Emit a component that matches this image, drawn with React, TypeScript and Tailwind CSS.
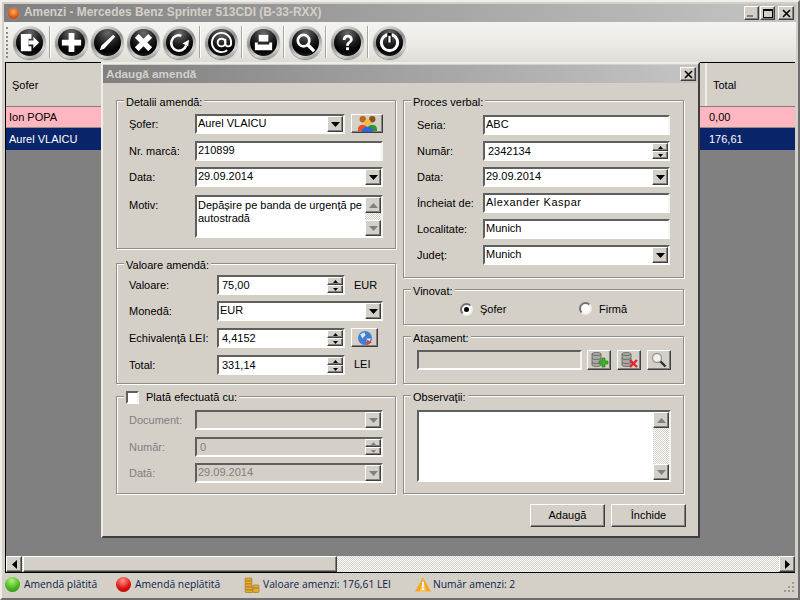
import { ReactNode } from "react";

const raised =
  "border border-t-white border-l-white border-r-[#404040] border-b-[#404040] shadow-[inset_-1px_-1px_0_#808080] bg-[#d4d0c8]";
const sunken =
  "border-2 border-t-[#5f5f5f] border-l-[#5f5f5f] border-r-[#f4f3ef] border-b-white";
const dither =
  "bg-[repeating-conic-gradient(#d4d0c8_0_25%,#ffffff_0_50%)] bg-[length:2px_2px]";
const uiFont = "font-['Liberation_Sans',Arial,sans-serif] text-[11px]";

function Round({ children }: { children: ReactNode }) {
  return (
    <div className="w-[36px] h-[40px] flex items-center justify-center shrink-0">
      <div className="w-[33px] h-[33px] rounded-full bg-[linear-gradient(160deg,#f5f5f5_0%,#8c8c8c_45%,#d8d8d8_75%,#6f6f6f_100%)] flex items-center justify-center shadow-[0_1px_1px_#8a8a8a]">
        <div className="w-[27px] h-[27px] rounded-full bg-[radial-gradient(circle_at_50%_15%,#6a6a6a_0%,#1c1c1c_45%,#000000_70%,#333333_100%)] flex items-center justify-center">
          <svg width="23" height="23" viewBox="0 0 24 24">
            {children}
          </svg>
        </div>
      </div>
    </div>
  );
}

function Sep() {
  return (
    <div className="w-[6px] h-[32px] shrink-0 flex justify-center">
      <div className="w-[2px] h-full border-l border-l-[#a8a69e] border-r border-r-white" />
    </div>
  );
}

function Toolbar() {
  return (
    <div className="h-[40px] flex items-center bg-[linear-gradient(180deg,#f4f3ef_0%,#ebeae5_60%,#dedcd5_100%)] relative">
      <div className="w-[2px] h-[31px] ml-[2px] mr-[3px] border-l-2 border-dotted border-l-[#8b8980]" />
      <Round>
        <path d="M3 3h11v5h-3v8h3v5H3z" fill="#fff" />
        <path d="M11 10h5V6l6 6-6 6v-4h-5z" fill="#fff" />
      </Round>
      <Sep />
      <Round>
        <path d="M9 2h6v7h7v6h-7v7H9v-7H2V9h7z" fill="#fff" />
      </Round>
      <Round>
        <path d="M4 20l1.500-4.500L18 4l2 2L8.500 18.500z" fill="#fff" />
      </Round>
      <Round>
        <path d="M7 3l5 5 5-5 4 4-5 5 5 5-4 4-5-5-5 5-4-4 5-5-5-5z" fill="#fff" />
      </Round>
      <Round>
        <path d="M19 15a8 8 0 1 1-5-10" fill="none" stroke="#fff" strokeWidth="2.600" />
        <path d="M22 9l-1 7-6-3z" fill="#fff" />
      </Round>
      <Sep />
      <Round>
        <g fill="none" stroke="#fff" strokeWidth="2">
          <circle cx="12" cy="12" r="4" />
          <path d="M16 8v5a3 3 0 0 0 6 0v-1a10 10 0 1 0-4 8" />
        </g>
      </Round>
      <Sep />
      <Round>
        <path d="M7 4h10v7H7z" fill="#fff" />
        <path d="M3 12h3v2h12v-2h3v8H3z" fill="#fff" />
      </Round>
      <Sep />
      <Round>
        <circle cx="10" cy="10" r="6" fill="none" stroke="#fff" strokeWidth="2.800" />
        <path d="M14 14l7 7" stroke="#fff" strokeWidth="3.600" />
      </Round>
      <Sep />
      <Round>
        <path
          d="M7 9.500C7 6 9 4 12.200 4 15.400 4 17.500 6 17.500 8.700c0 3.800-4 3.600-4 6.800h-3c0-4.500 4-4.300 4-6.700 0-1.200-.9-2-2.200-2-1.500 0-2.300 1-2.400 2.700z"
          fill="#fff"
        />
        <rect x="10.500" y="17" width="3" height="3" fill="#fff" />
      </Round>
      <Sep />
      <Round>
        <circle cx="12" cy="12" r="8.500" fill="none" stroke="#fff" strokeWidth="3.200" />
        <path d="M12 2v10" stroke="#000" strokeWidth="4.500" />
        <path d="M12 5v7" stroke="#fff" strokeWidth="2.400" />
      </Round>
    </div>
  );
}

function WinBtn({ children, className }: { children: ReactNode; className?: string }) {
  return (
    <div className={`${raised} flex items-center justify-center h-[14px] ${className ?? ""}`}>
      {children}
    </div>
  );
}

function Cross() {
  return (
    <svg width="9" height="9" viewBox="0 0 9 9">
      <path d="M1 1l7 7M8 1L1 8" stroke="#000" strokeWidth="1.600" />
    </svg>
  );
}

function TitleBar() {
  return (
    <div className="h-[18px] flex items-center bg-[linear-gradient(90deg,#808080_0%,#c4c4c4_100%)]">
      <div className="w-[13px] h-[13px] ml-[3px] rounded-full border border-[#8a8a8a] bg-[radial-gradient(circle_at_50%_35%,#ffb34d_0%,#e2531a_60%,#a82c10_100%)]" />
      <span className="ml-[4px] font-['Liberation_Sans',Arial,sans-serif] text-[11.900px] font-bold text-[#d4d0c8] whitespace-nowrap">
        Amenzi - Mercedes Benz Sprinter 513CDI (B-33-RXX)
      </span>
      <div className="ml-auto mr-[2px] flex">
        <WinBtn className="w-[15px] items-end pb-[2px]">
          <div className="w-[6px] h-[2px] bg-[#808080] mr-[3px]" />
        </WinBtn>
        <WinBtn className="w-[15px] ml-[1px]">
          <div className="w-[10px] h-[9px] border border-t-2 border-black" />
        </WinBtn>
        <WinBtn className="w-[16px] ml-[3px]">
          <Cross />
        </WinBtn>
      </div>
    </div>
  );
}

function Group({
  title,
  className,
  children,
}: {
  title: ReactNode;
  className?: string;
  children: ReactNode;
}) {
  return (
    <div
      className={`relative border border-[#8f8d86] shadow-[1px_1px_0_#ffffff,inset_1px_1px_0_#ffffff] ${className ?? ""}`}
    >
      <div className="absolute -top-[6px] left-[7px] px-[2px] bg-[#d4d0c8] leading-[14px] text-black whitespace-nowrap">
        {title}
      </div>
      {children}
    </div>
  );
}

function Arrow({ up, gray }: { up?: boolean; gray?: boolean }) {
  return (
    <svg width="9" height="5" viewBox="0 0 9 5">
      <path d={up ? "M4.500 0L9 5H0z" : "M0 0h9L4.500 5z"} fill={gray ? "#808080" : "#000"} />
    </svg>
  );
}

function Field({
  value,
  disabled,
  className,
  textClass,
  children,
}: {
  value?: string;
  disabled?: boolean;
  className?: string;
  textClass?: string;
  children?: ReactNode;
}) {
  return (
    <div
      className={`${sunken} h-[20px] flex items-stretch min-w-0 ${disabled ? "bg-[#d4d0c8] text-[#808080]" : "bg-white text-black"} ${className ?? ""}`}
    >
      <div className={`flex-1 leading-[15px] whitespace-nowrap overflow-hidden ${textClass ?? "pl-[1px]"}`}>{value}</div>
      {children}
    </div>
  );
}

function Combo({ value, disabled, className }: { value?: string; disabled?: boolean; className?: string }) {
  return (
    <Field value={value} disabled={disabled} className={className}>
      <div className={`${raised} w-[16px] flex items-center justify-center`}>
        <Arrow gray={disabled} />
      </div>
    </Field>
  );
}

function Spin({ value, disabled, className }: { value?: string; disabled?: boolean; className?: string }) {
  return (
    <Field value={value} disabled={disabled} className={className} textClass="pl-[3px] pt-[1px]">
      <div className="w-[16px] flex flex-col">
        <div className={`${raised} flex-1 flex items-center justify-center`}>
          <svg width="5" height="3" viewBox="0 0 5 3">
            <path d="M2.500 0L5 3H0z" fill={disabled ? "#808080" : "#000"} />
          </svg>
        </div>
        <div className={`${raised} flex-1 flex items-center justify-center`}>
          <svg width="5" height="3" viewBox="0 0 5 3">
            <path d="M0 0h5L2.500 3z" fill={disabled ? "#808080" : "#000"} />
          </svg>
        </div>
      </div>
    </Field>
  );
}

function Row({
  label,
  labelW,
  disabled,
  className,
  children,
}: {
  label: string;
  labelW: string;
  disabled?: boolean;
  className?: string;
  children: ReactNode;
}) {
  return (
    <div className={`flex items-start ${className ?? ""}`}>
      <div className={`${labelW} shrink-0 leading-[20px] whitespace-nowrap ${disabled ? "text-[#808080]" : "text-black"}`}>
        {label}
      </div>
      {children}
    </div>
  );
}

function VScroll({ gray }: { gray?: boolean }) {
  return (
    <div className={`w-[16px] flex flex-col ${dither}`}>
      <div className={`${raised} h-[16px] flex items-center justify-center`}>
        <Arrow up gray={gray} />
      </div>
      <div className="flex-1" />
      <div className={`${raised} h-[16px] flex items-center justify-center`}>
        <Arrow gray={gray} />
      </div>
    </div>
  );
}

function IconBtn({ className, children }: { className?: string; children: ReactNode }) {
  return <div className={`${raised} flex items-center justify-center ${className ?? ""}`}>{children}</div>;
}

function Database({ children }: { children: ReactNode }) {
  return (
    <svg width="20" height="18" viewBox="0 0 20 18">
      <g fill="#a9a9a4" stroke="#5c5c58" strokeWidth="0.800">
        <path d="M3 3c0-2 9-2 9 0v11c0 2-9 2-9 0z" />
        <path d="M3 3c0 2 9 2 9 0M3 7c0 2 9 2 9 0M3 11c0 2 9 2 9 0" fill="none" />
      </g>
      {children}
    </svg>
  );
}

function Dialog() {
  return (
    <div
      className={`absolute left-[95px] top-[-1px] w-[599px] h-[476px] bg-[#d4d0c8] border-2 border-t-[#eeece6] border-l-[#eeece6] border-r-[#404040] border-b-[#404040] ${uiFont}`}
    >
      <div className="h-[18px] mt-[1px] flex items-center bg-[linear-gradient(90deg,#808080_0%,#c4c4c4_100%)]">
        <span className="ml-[3px] text-[11.700px] font-bold text-[#d4d0c8]">Adaugă amendă</span>
        <WinBtn className="w-[16px] ml-auto mr-[2px]">
          <Cross />
        </WinBtn>
      </div>

      <div className="flex gap-[7px] pl-[13px] pt-[17px]">
        {/* left column */}
        <div className="w-[280px] flex flex-col">
          <Group title="Detalii amendă:" className="h-[149px] pl-[12px] pr-[12px] pt-[13px]">
            <Row label="Şofer:" labelW="w-[66px]">
              <Combo value="Aurel VLAICU" className="w-[150px]" />
              <IconBtn className="w-[32px] h-[19px] ml-[6px]">
                <svg width="19" height="17" viewBox="0 0 18 16">
                  <circle cx="4.500" cy="4" r="3" fill="#b8691f" />
                  <circle cx="13.500" cy="4" r="3" fill="#8f4f18" />
                  <path d="M0 13c0-5 9-5 9 0v2H0z" fill="#e8501c" />
                  <path d="M9 13c0-5 9-5 9 0v2H9z" fill="#2f9a2a" />
                  <circle cx="9" cy="7" r="3" fill="#f4bb3d" />
                  <path d="M3.500 16c0-6.500 11-6.500 11 0z" fill="#2f66dc" />
                </svg>
              </IconBtn>
            </Row>
            <Row label="Nr. marcă:" labelW="w-[66px]" className="mt-[7px]">
              <Field value="210899" className="w-[188px]" />
            </Row>
            <Row label="Data:" labelW="w-[66px]" className="mt-[6px]">
              <Combo value="29.09.2014" className="w-[188px]" />
            </Row>
            <Row label="Motiv:" labelW="w-[66px]" className="mt-[8px]">
              <div className={`${sunken} w-[188px] h-[43px] flex bg-white`}>
                <div className="flex-1 pl-[1px] pt-[2px] leading-[13px] text-black">
                  Depășire pe banda de urgență pe autostradă
                </div>
                <VScroll gray />
              </div>
            </Row>
          </Group>

          <Group title="Valoare amendă:" className="h-[121px] mt-[14px] pl-[12px] pr-[12px] pt-[11px]">
            <Row label="Valoare:" labelW="w-[88px]">
              <Spin value="75,00" className="w-[128px]" />
              <span className="ml-[9px] leading-[20px] text-black">EUR</span>
            </Row>
            <Row label="Monedă:" labelW="w-[88px]" className="mt-[6px]">
              <Combo value="EUR" className="w-[166px]" />
            </Row>
            <Row label="Echivalenţă LEI:" labelW="w-[88px]" className="mt-[7px]">
              <Spin value="4,4152" className="w-[128px]" />
              <IconBtn className="w-[27px] h-[19px] ml-[6px]">
                <svg width="16" height="16" viewBox="0 0 15 15">
                  <circle cx="7.500" cy="7.500" r="6.500" fill="#3f7fd0" />
                  <path d="M3 4l4-2 1 3-3 3zM9 8l4 0-2 5-2-2z" fill="#d8e6f6" />
                  <path d="M9 9l5 2.500-5 3z" fill="#d24a3a" />
                </svg>
              </IconBtn>
            </Row>
            <Row label="Total:" labelW="w-[88px]" className="mt-[7px]">
              <Spin value="331,14" className="w-[128px]" />
              <span className="ml-[9px] leading-[18px] text-black">LEI</span>
            </Row>
          </Group>

          <Group
            title={
              <span className="flex items-center -mt-[1px]">
                <span className={`${sunken} w-[13px] h-[13px] bg-white mr-[7px]`} />
                Plată efectuată cu:
              </span>
            }
            className="h-[98px] mt-[12px] pl-[12px] pr-[12px] pt-[13px]"
          >
            <Row label="Document:" labelW="w-[66px]" disabled>
              <Combo disabled className="w-[188px]" />
            </Row>
            <Row label="Număr:" labelW="w-[66px]" disabled className="mt-[7px]">
              <Spin value="0" disabled className="w-[188px]" />
            </Row>
            <Row label="Dată:" labelW="w-[66px]" disabled className="mt-[6px]">
              <Combo value="29.09.2014" disabled className="w-[188px]" />
            </Row>
          </Group>
        </div>

        {/* right column */}
        <div className="w-[281px] flex flex-col">
          <Group title="Proces verbal:" className="h-[178px] pl-[13px] pr-[13px] pt-[14px]">
            <Row label="Seria:" labelW="w-[66px]">
              <Field value="ABC" className="w-[187px]" />
            </Row>
            <Row label="Număr:" labelW="w-[66px]" className="mt-[6px]">
              <Spin value="2342134" className="w-[187px]" />
            </Row>
            <Row label="Data:" labelW="w-[66px]" className="mt-[6px]">
              <Combo value="29.09.2014" className="w-[187px]" />
            </Row>
            <Row label="Încheiat de:" labelW="w-[66px]" className="mt-[6px]">
              <Field value="Alexander Kaspar" className="w-[187px]" textClass="pl-[1px] tracking-[0.5px]" />
            </Row>
            <Row label="Localitate:" labelW="w-[66px]" className="mt-[6px]">
              <Field value="Munich" className="w-[187px]" />
            </Row>
            <Row label="Județ:" labelW="w-[66px]" className="mt-[6px]">
              <Combo value="Munich" className="w-[187px]" />
            </Row>
          </Group>

          <Group title="Vinovat:" className="h-[36px] mt-[11px]">
            <div className="flex pt-[12px] pl-[56px] leading-[14px] text-black">
              <div className="flex items-center w-[119px]">
                <div className="w-[13px] h-[13px] rounded-full bg-white border-2 border-t-[#707070] border-l-[#707070] border-r-[#efeee9] border-b-[#efeee9] flex items-center justify-center mr-[7px]">
                  <div className="w-[5px] h-[5px] rounded-full bg-black" />
                </div>
                Şofer
              </div>
              <div className="flex items-center -mt-[1px]">
                <div className="w-[13px] h-[13px] rounded-full bg-white border-2 border-t-[#707070] border-l-[#707070] border-r-[#efeee9] border-b-[#efeee9] mr-[7px]" />
                Firmă
              </div>
            </div>
          </Group>

          <Group title="Ataşament:" className="h-[48px] mt-[11px] pl-[13px] pt-[13px]">
            <div className="flex">
              <div className={`${sunken} w-[165px] h-[20px] bg-[#d4d0c8]`} />
              <IconBtn className="w-[24px] h-[20px] ml-[5px]">
                <Database>
                  <path d="M10 10h3V7h3v3h3v3h-3v3h-3v-3h-3z" fill="#43b02a" stroke="#1f7a14" strokeWidth="0.600" />
                </Database>
              </IconBtn>
              <IconBtn className="w-[24px] h-[20px] ml-[6px]">
                <Database>
                  <path d="M11 9l7 7M18 9l-7 7" stroke="#e0262a" strokeWidth="2.400" />
                </Database>
              </IconBtn>
              <IconBtn className="w-[24px] h-[20px] ml-[6px]">
                <svg width="18" height="16" viewBox="0 0 18 16">
                  <circle cx="7" cy="6" r="4.500" fill="#f2f2f0" stroke="#9a9a96" strokeWidth="1.400" />
                  <path d="M10.500 9.500l5 5" stroke="#303030" strokeWidth="2.400" />
                </svg>
              </IconBtn>
            </div>
          </Group>

          <Group title="Observaţii:" className="h-[99px] mt-[11px] pl-[13px] pt-[14px]">
            <div className={`${sunken} w-[254px] h-[72px] flex bg-white`}>
              <div className="flex-1" />
              <VScroll gray />
            </div>
          </Group>
        </div>
      </div>

      <div className="flex justify-end gap-[6px] mt-[10px] pr-[12px]">
        <div className={`${raised} w-[75px] h-[23px] flex items-center justify-center text-black`}>Adaugă</div>
        <div className={`${raised} w-[75px] h-[23px] flex items-center justify-center text-black`}>Închide</div>
      </div>
    </div>
  );
}

function Grid() {
  return (
    <div className={`relative flex-1 mx-[1px] flex flex-col border-t border-l border-black bg-[#808080] ${uiFont}`}>
      <div className="h-[44px] flex bg-[#d4d0c8] border-b border-[#808080]">
        <div className="flex-1 pl-[6px] leading-[44px] text-black">Şofer</div>
        <div className="w-[90px] pl-[6px] leading-[44px] text-black border-l-2 border-l-[#efeee9]">Total</div>
      </div>
      <div className="h-[21px] flex bg-[#ffb6c1] text-black border-b border-[#8f8d86] leading-[20px]">
        <div className="flex-1 pl-[3px]">Ion POPA</div>
        <div className="w-[92px] pl-[6px]">0,00</div>
      </div>
      <div className="h-[22px] flex bg-[#0a246a] text-white leading-[22px]">
        <div className="flex-1 pl-[3px]">Aurel VLAICU</div>
        <div className="w-[92px] pl-[6px]">176,61</div>
      </div>
      <div className="flex-1" />
      <div className={`h-[17px] flex border-b border-black ${dither}`}>
        <div className={`${raised} w-[16px] flex items-center justify-center`}>
          <svg width="5" height="9" viewBox="0 0 5 9">
            <path d="M5 0v9L0 4.500z" fill="#000" />
          </svg>
        </div>
        <div className={`${raised} w-[314px] ml-[1px]`} />
        <div className="flex-1" />
        <div className={`${raised} w-[16px] flex items-center justify-center`}>
          <svg width="5" height="9" viewBox="0 0 5 9">
            <path d="M0 0v9l5-4.500z" fill="#000" />
          </svg>
        </div>
      </div>
      <Dialog />
    </div>
  );
}

function StatusBar() {
  return (
    <div className="h-[23px] flex items-center text-[#0a1f4a] font-['Open_Sans',Arial,sans-serif] text-[10.300px] whitespace-nowrap">
      <div className="w-[15px] h-[15px] rounded-full ml-[1px] bg-[radial-gradient(circle_at_45%_25%,#b6f27a_0%,#49b81f_55%,#2c7d12_100%)]" />
      <span className="ml-[4px] w-[92px]">Amendă plătită</span>
      <div className="w-[15px] h-[15px] rounded-full bg-[radial-gradient(circle_at_45%_25%,#ff9a8a_0%,#e01010_55%,#9c0505_100%)]" />
      <span className="ml-[4px] w-[109px]">Amendă neplătită</span>
      <svg width="16" height="16" viewBox="0 0 16 16">
        <g fill="#e0ac35" stroke="#a8761a" strokeWidth="0.700">
          <rect x="1" y="1" width="7" height="3" rx="1" />
          <rect x="1" y="4" width="7" height="3" rx="1" />
          <rect x="1" y="7" width="7" height="3" rx="1" />
          <rect x="1" y="10" width="8" height="3" rx="1" />
          <rect x="1" y="13" width="8" height="2.500" rx="1" />
          <rect x="9" y="8" width="6" height="3" rx="1" />
          <rect x="9" y="11" width="6" height="4.500" rx="1" />
        </g>
      </svg>
      <span className="ml-[3px] w-[152px]">Valoare amenzi: 176,61 LEI</span>
      <svg width="16" height="15" viewBox="0 0 16 15">
        <path d="M8 0.500L16 14.500H0z" fill="#f5a623" />
        <path d="M8 2l3 12.500H5z" fill="#fbc96b" />
        <rect x="7" y="5" width="2" height="5" fill="#fff" />
        <rect x="7" y="11" width="2" height="2" fill="#fff" />
      </svg>
      <span className="ml-[2px]">Număr amenzi: 2</span>
      <svg className="ml-auto mr-[1px] self-end mb-[3px]" width="13" height="13" viewBox="0 0 13 13">
        <g fill="#9c9a92">
          <rect x="10" y="2" width="2" height="2" />
          <rect x="6" y="6" width="2" height="2" />
          <rect x="10" y="6" width="2" height="2" />
          <rect x="2" y="10" width="2" height="2" />
          <rect x="6" y="10" width="2" height="2" />
          <rect x="10" y="10" width="2" height="2" />
        </g>
      </svg>
    </div>
  );
}

export default function App() {
  return (
    <div className="w-[800px] h-[600px] overflow-hidden bg-[#d4d0c8] border-t-2 border-l-2 border-t-[#efeee9] border-l-[#efeee9] border-r-2 border-b-2 border-r-[#6f6f6f] border-b-[#6f6f6f] p-[2px] flex flex-col">
      <TitleBar />
      <Toolbar />
      <Grid />
      <StatusBar />
    </div>
  );
}
